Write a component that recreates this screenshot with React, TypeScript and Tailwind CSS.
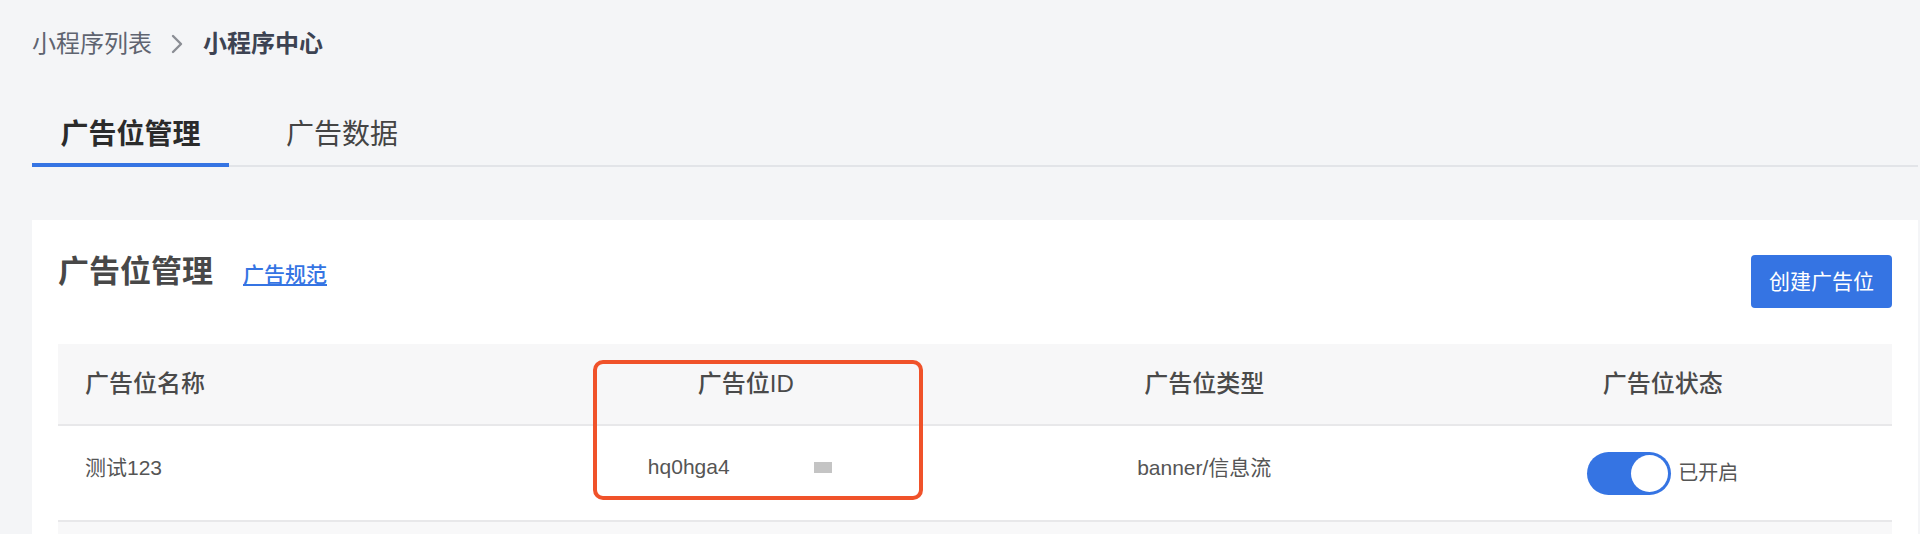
import { useState } from "react";

const font = { fontFamily: '"Liberation Sans", "Noto Sans CJK SC", sans-serif' };

export default function App() {
  const [enabled, setEnabled] = useState(true);
  const [tab, setTab] = useState(0);

  return (
    <main
      className="min-h-screen bg-[#f4f5f7] pl-[32px] pr-[2px] font-['Liberation_Sans','Noto_Sans_CJK_SC',sans-serif]"
      style={font}
    >
      {/* 面包屑 */}
      <div className="h-[88px] flex items-center text-[24px] leading-[32px]">
        <span className="text-[#5f6470]">小程序列表</span>
        <svg width="12" height="20" viewBox="0 0 12 20" className="ml-[19px] mr-[20px]">
          <path d="M2 2 L10 10 L2 18" fill="none" stroke="#8a8d94" strokeWidth="2.4" strokeLinecap="round" strokeLinejoin="round" />
        </svg>
        <span className="text-[#3d4352] font-bold">小程序中心</span>
      </div>

      {/* 标签页 */}
      <div className="flex items-end border-b-2 border-[#e2e4e8]">
        {["广告位管理", "广告数据"].map((t, i) => (
          <button
            key={t}
            onClick={() => setTab(i)}
            className={
              i === tab
                ? "w-[197px] pt-[27px] pb-[8px] -mb-[2px] border-b-4 border-[#3574e3] text-[28px] leading-[40px] font-bold text-[#2b2b2b]"
                : "ml-[29px] px-[28px] pt-[27px] pb-[10px] text-[28px] leading-[40px] text-[#444]"
            }
          >
            {t}
          </button>
        ))}
      </div>

      {/* 卡片 */}
      <section className="mt-[53px] bg-white px-[26px] pt-[32px]">
        <div className="flex justify-between items-start">
          <div className="flex items-baseline h-[40px]">
            <h2 className="text-[31px] leading-[40px] font-semibold text-[#484848]">广告位管理</h2>
            <a href="#" className="ml-[30px] text-[21px] font-medium text-[#3574e3] underline underline-offset-2">
              广告规范
            </a>
          </div>
          <button className="mt-[3px] w-[141px] h-[53px] rounded-[4px] bg-[#3574e3] text-white text-[21px]">
            创建广告位
          </button>
        </div>

        <div className="relative mt-[36px]">
          <div className="grid grid-cols-4 h-[82px] items-center bg-[#f7f7f8] border-b-2 border-[#e8e8ea] text-[24px] font-medium text-[#4a4a4a]">
            <div className="pl-[27px]">广告位名称</div>
            <div className="text-center">广告位ID</div>
            <div className="text-center">广告位类型</div>
            <div className="text-center">广告位状态</div>
          </div>

          <div className="grid grid-cols-4 h-[96px] items-center border-b-2 border-[#e8e8ea] text-[21px] text-[#555]">
            <div className="pl-[27px] pb-[10px]">测试123</div>
            <div className="flex justify-center items-center pb-[12px] pr-[12px]">
              <span>hq0hga4</span>
              <span className="ml-[84px] w-[18px] h-[11px] bg-[#c4c4c4]" />
            </div>
            <div className="text-center pb-[10px]">banner/信息流</div>
            <div className="flex justify-center items-center">
              <button
                onClick={() => setEnabled(!enabled)}
                className={
                  enabled
                    ? "w-[84px] h-[43px] rounded-full bg-[#3574e3] flex items-center justify-end px-[3px]"
                    : "w-[84px] h-[43px] rounded-full bg-[#cfd3da] flex items-center justify-start px-[3px]"
                }
              >
                <span className="w-[37px] h-[37px] rounded-full bg-white" />
              </button>
              <span className="ml-[7px] text-[20px] text-[#555]">{enabled ? "已开启" : "已关闭"}</span>
            </div>
          </div>

          <div className="h-[20px] bg-[#f8f8f9]" />

          {/* 标注框 */}
          <div className="absolute left-[535px] top-[16px] w-[330px] h-[140px] border-4 border-[#f0522a] rounded-[10px] pointer-events-none" />
        </div>
      </section>
    </main>
  );
}
